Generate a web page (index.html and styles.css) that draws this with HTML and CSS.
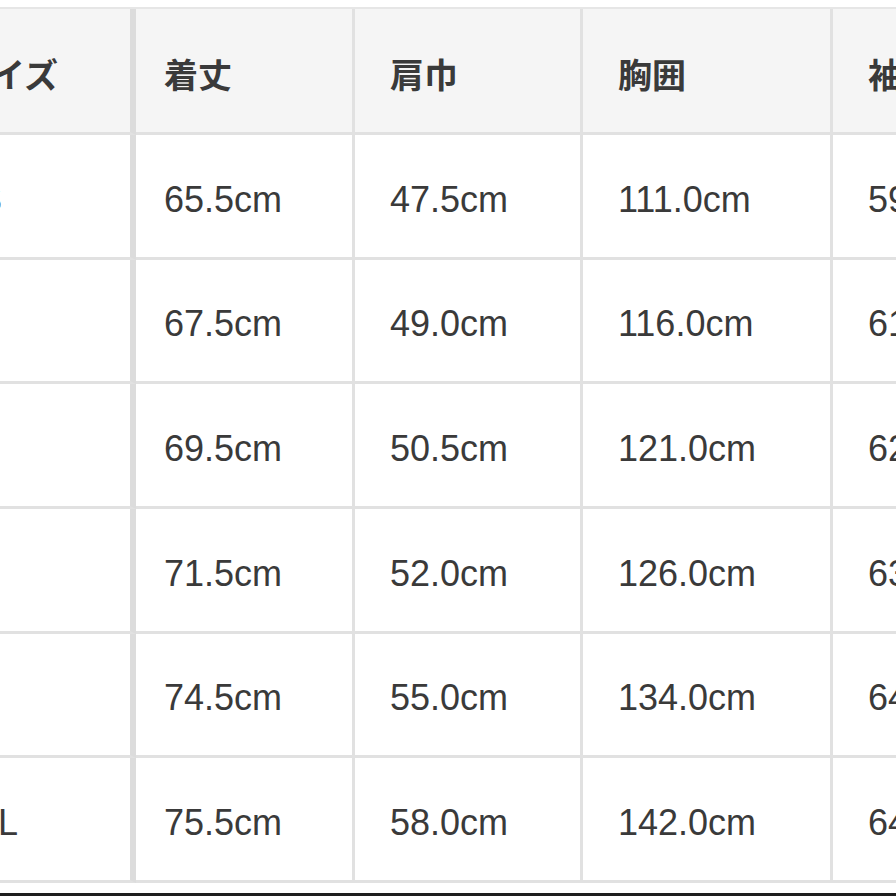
FILE: index.html
```html
<!DOCTYPE html>
<html lang="ja">
<head>
<meta charset="utf-8">
<title>サイズ表</title>
<link rel="stylesheet" href="styles.css">
</head>
<body>
<div class="page">
  <table class="chart">
    <thead>
      <tr>
        <th class="c0">サイズ</th>
        <th class="c1">着丈</th>
        <th class="c2">肩巾</th>
        <th class="c3">胸囲</th>
        <th class="c4">袖丈</th>
      </tr>
    </thead>
    <tbody>
      <tr><td class="c0">XS</td><td class="c1">65.5cm</td><td class="c2">47.5cm</td><td class="c3">111.0cm</td><td class="c4">59.0cm</td></tr>
      <tr><td class="c0">S</td><td class="c1">67.5cm</td><td class="c2">49.0cm</td><td class="c3">116.0cm</td><td class="c4">61.0cm</td></tr>
      <tr><td class="c0">M</td><td class="c1">69.5cm</td><td class="c2">50.5cm</td><td class="c3">121.0cm</td><td class="c4">62.0cm</td></tr>
      <tr><td class="c0">L</td><td class="c1">71.5cm</td><td class="c2">52.0cm</td><td class="c3">126.0cm</td><td class="c4">63.0cm</td></tr>
      <tr><td class="c0">XL</td><td class="c1">74.5cm</td><td class="c2">55.0cm</td><td class="c3">134.0cm</td><td class="c4">64.0cm</td></tr>
      <tr><td class="c0">3XL</td><td class="c1">75.5cm</td><td class="c2">58.0cm</td><td class="c3">142.0cm</td><td class="c4">64.5cm</td></tr>
    </tbody>
  </table>
  <div class="bottom-bar"></div>
</div>
</body>
</html>
```

FILE: styles.css
```css
html, body {
  margin: 0;
  padding: 0;
  background: #ffffff;
}

body {
  width: 896px;
  height: 896px;
  overflow: hidden;
}

.page {
  padding-top: 7px;
  width: 896px;
}

.chart {
  border-collapse: separate;
  border-spacing: 0;
  table-layout: fixed;
  width: 1164px;
  margin-left: -81px;
  border-top: 2px solid #e6e6e6;
  font-family: "Liberation Sans", Arial, "Noto Sans CJK JP", sans-serif;
  color: #3a3a3a;
}

.chart th,
.chart td {
  box-sizing: border-box;
  text-align: left;
  vertical-align: middle;
  border-right: 3px solid #e1e1e1;
  border-bottom: 3px solid #e1e1e1;
  padding: 8px 0 0 35px;
  white-space: nowrap;
  line-height: 1;
}

.chart th {
  height: 126px;
  background: #f5f5f5;
  font-family: "Noto Sans CJK JP", "Liberation Sans", sans-serif;
  font-weight: 700;
  font-size: 34px;
  padding-top: 6px;
}

.chart td {
  height: 124.67px;
  background: #ffffff;
  font-size: 36px;
}

.chart .c0 {
  width: 217px;
  border-right: 6px solid #dcdcdc;
}

.chart th.c0 {
  padding-left: 38px;
}

.chart .c1 {
  width: 219px;
  padding-left: 28px;
}

.chart .c2 {
  width: 228px;
}

.chart .c3 {
  width: 250px;
}

.chart .c4 {
  width: 250px;
}

.bottom-bar {
  margin-top: 10px;
  height: 3px;
  background: #1e1e1e;
}
```
